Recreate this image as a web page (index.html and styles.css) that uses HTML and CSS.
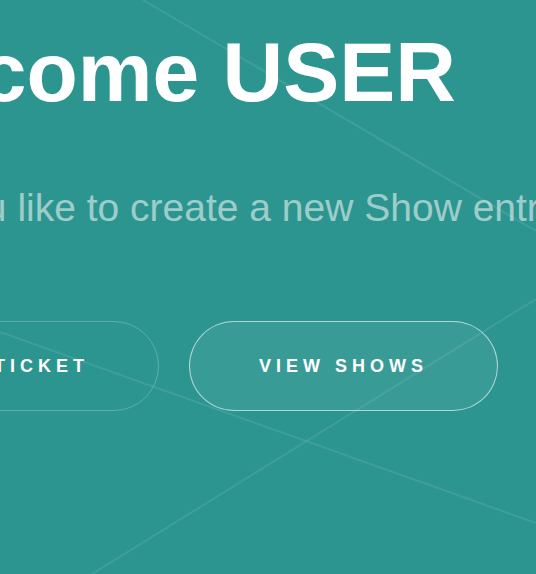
FILE: index.html
```html
<!DOCTYPE html>
<html lang="en">
<head>
<meta charset="utf-8">
<title>Welcome</title>
<link rel="stylesheet" href="styles.css">
</head>
<body>
<svg class="bg-lines" width="536" height="574" viewBox="0 0 536 574" aria-hidden="true">
  <line x1="143" y1="0" x2="536" y2="231" />
  <line x1="0" y1="332" x2="536" y2="523" />
  <line x1="92" y1="574" x2="536" y2="299" />
</svg>
<main class="hero">
  <h1 class="hero-title">Welcome USER</h1>
  <p class="hero-sub">Would you like to create a new Show entry?</p>
  <div class="hero-actions">
    <a class="pill pill-ghost" href="#">Book Ticket</a>
    <a class="pill pill-active" href="#">View Shows</a>
  </div>
</main>
</body>
</html>
```
FILE: styles.css
```css
html, body {
  margin: 0;
  padding: 0;
}
body {
  width: 536px;
  height: 574px;
  overflow: hidden;
  background: #2d9590;
  font-family: "Liberation Sans", Arial, sans-serif;
  position: relative;
}
.bg-lines {
  position: absolute;
  left: 0;
  top: 0;
  z-index: 0;
}
.bg-lines line {
  stroke: rgba(255, 255, 255, 0.09);
  stroke-width: 2;
}
.hero {
  position: relative;
  z-index: 1;
  margin-left: -168px;
  width: 900px;
  display: flex;
  flex-direction: column;
  align-items: flex-start;
  white-space: nowrap;
}
.hero-title {
  margin: 30px 0 0;
  font-size: 84px;
  line-height: 84px;
  font-weight: 700;
  color: #ffffff;
}
.hero-sub {
  margin: 74px 0 0 -9px;
  font-size: 39px;
  line-height: 39px;
  color: rgba(255, 255, 255, 0.55);
}
.hero-actions {
  margin: 94px 0 0 8px;
  display: flex;
  gap: 30px;
}
.pill {
  box-sizing: border-box;
  height: 90px;
  padding: 0 69px;
  border-radius: 45px;
  display: flex;
  align-items: center;
  justify-content: center;
  font-size: 18px;
  font-weight: 700;
  letter-spacing: 5px;
  text-transform: uppercase;
  text-decoration: none;
  color: #ffffff;
}
.pill-ghost {
  border: 1px solid rgba(255, 255, 255, 0.22);
  background: transparent;
}
.pill-active {
  border: 1px solid rgba(255, 255, 255, 0.6);
  background: rgba(255, 255, 255, 0.06);
}
```
